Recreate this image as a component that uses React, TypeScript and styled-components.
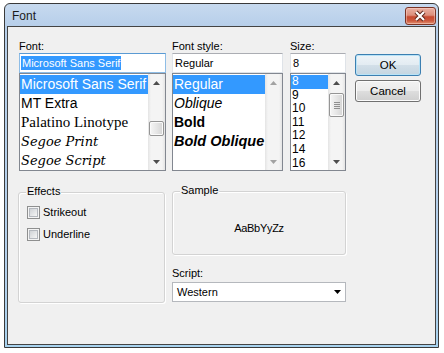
import styled, { createGlobalStyle } from "styled-components";

const GlobalStyle = createGlobalStyle`
  html, body {
    margin: 0;
    padding: 0;
    background: #fff;
  }
  body {
    font-family: "Liberation Sans", Arial, sans-serif;
    font-size: 11px;
    color: #000;
  }
`;

type FontItem = {
  name: string;
  family: string;
  size: number;
  italic?: boolean;
  bold?: boolean;
};

const fonts: FontItem[] = [
  { name: "Microsoft Sans Serif", family: '"Liberation Sans", sans-serif', size: 14 },
  { name: "MT Extra", family: '"Liberation Sans", sans-serif', size: 14 },
  { name: "Palatino Linotype", family: '"Liberation Serif", serif', size: 15 },
  { name: "Segoe Print", family: '"DejaVu Serif", serif', size: 13, italic: true },
  { name: "Segoe Script", family: '"DejaVu Serif", serif', size: 13, italic: true },
];

const styles: FontItem[] = [
  { name: "Regular", family: '"Liberation Sans", sans-serif', size: 14 },
  { name: "Oblique", family: '"Liberation Sans", sans-serif', size: 14, italic: true },
  { name: "Bold", family: '"Liberation Sans", sans-serif', size: 14, bold: true },
  { name: "Bold Oblique", family: '"Liberation Sans", sans-serif', size: 14.5, italic: true, bold: true },
];

const sizes = ["8", "9", "10", "11", "12", "14", "16"];

export default function App() {
  return (
    <>
      <GlobalStyle />
      <Window>
        <TitleBar>
          <Title>Font</Title>
          <CloseButton>
            <svg width="29" height="16" viewBox="0 0 29 16">
              <path d="M10 4 L18 12 M18 4 L10 12" stroke="#5b2317" strokeWidth="4" />
              <path d="M10 4 L18 12 M18 4 L10 12" stroke="#fff" strokeWidth="2.2" />
            </svg>
          </CloseButton>
        </TitleBar>
        <Client>
          <TopRow>
            <Column $width={147}>
              <Label>Font:</Label>
              <TextBox $focused>
                <Selected>Microsoft Sans Serif</Selected>
              </TextBox>
              <ListBox>
                <Items>
                  {fonts.map((f, i) => (
                    <Item
                      key={f.name}
                      $h={19}
                      $family={f.family}
                      $size={f.size}
                      $italic={f.italic}
                      $bold={f.bold}
                      $selected={i === 0}
                    >
                      {f.name}
                    </Item>
                  ))}
                </Items>
                <ScrollBar thumbTop={30} thumbHeight={15} />
              </ListBox>
            </Column>
            <Column $width={111} $gap={6}>
              <Label>Font style:</Label>
              <TextBox>Regular</TextBox>
              <ListBox>
                <Items>
                  {styles.map((f, i) => (
                    <Item
                      key={f.name}
                      $h={19}
                      $family={f.family}
                      $size={f.size}
                      $italic={f.italic}
                      $bold={f.bold}
                      $selected={i === 0}
                    >
                      {f.name}
                    </Item>
                  ))}
                </Items>
                <ScrollBar disabled />
              </ListBox>
            </Column>
            <Column $width={56} $gap={7}>
              <Label>Size:</Label>
              <TextBox>8</TextBox>
              <ListBox>
                <Items>
                  {sizes.map((s, i) => (
                    <Item
                      key={s}
                      $h={13.6}
                      $family='"Liberation Sans", sans-serif'
                      $size={12}
                      $selected={i === 0}
                    >
                      {s}
                    </Item>
                  ))}
                </Items>
                <ScrollBar thumbTop={2} thumbHeight={24} grip />
              </ListBox>
            </Column>
            <ButtonColumn>
              <Button $default>OK</Button>
              <Button>Cancel</Button>
            </ButtonColumn>
          </TopRow>
          <BottomRow>
            <GroupBox $width={147} $height={111} $offset={1}>
              <Legend>Effects</Legend>
              <CheckList>
                <CheckRow>
                  <CheckBox>
                    <CheckInner />
                  </CheckBox>
                  Strikeout
                </CheckRow>
                <CheckRow>
                  <CheckBox>
                    <CheckInner />
                  </CheckBox>
                  Underline
                </CheckRow>
              </CheckList>
            </GroupBox>
            <RightStack>
              <GroupBox $width={174} $height={64}>
                <Legend>Sample</Legend>
                <SampleText>AaBbYyZz</SampleText>
              </GroupBox>
              <ScriptLabel>Script:</ScriptLabel>
              <Select>
                Western
                <svg width="7" height="4" viewBox="0 0 7 4">
                  <polygon points="0,0 7,0 3.5,4" fill="#000" />
                </svg>
              </Select>
            </RightStack>
          </BottomRow>
        </Client>
      </Window>
    </>
  );
}

interface ScrollBarProps {
  thumbTop?: number;
  thumbHeight?: number;
  grip?: boolean;
  disabled?: boolean;
}

const ScrollBar = ({ thumbTop, thumbHeight, grip, disabled }: ScrollBarProps) => {
  const color = disabled ? "#a3a3a3" : "#4d4d4d";
  return (
    <Bar>
      <ArrowBox>
        <svg width="7" height="4" viewBox="0 0 7 4">
          <polygon points="0,4 3.5,0 7,4" fill={color} />
        </svg>
      </ArrowBox>
      <Track>
        {thumbHeight !== undefined && (
          <Thumb $top={thumbTop ?? 0} $h={thumbHeight}>
            {grip && (
              <>
                <Grip />
                <Grip />
                <Grip />
                <Grip />
              </>
            )}
          </Thumb>
        )}
      </Track>
      <ArrowBox>
        <svg width="7" height="4" viewBox="0 0 7 4">
          <polygon points="0,0 7,0 3.5,4" fill={color} />
        </svg>
      </ArrowBox>
    </Bar>
  );
};

const Window = styled.div`
  box-sizing: border-box;
  width: 435px;
  height: 345px;
  margin: 3px 0 0 4px;
  border: 1px solid #3a3a3a;
  border-radius: 6px 6px 0 0;
  background: linear-gradient(#c7daef, #b7cfea 22px, #b3d0ec 80%, #a8d3ef);
  padding: 0 2px 2px;
  display: flex;
  flex-direction: column;
`;

const TitleBar = styled.div`
  height: 22px;
  display: flex;
  justify-content: space-between;
  align-items: flex-start;
  padding-left: 5px;
`;

const Title = styled.div`
  font-family: "Liberation Sans", Arial, sans-serif;
  font-size: 12px;
  line-height: 22px;
  padding-top: 1px;
  color: #1b1b1b;
`;

const CloseButton = styled.div`
  box-sizing: border-box;
  width: 31px;
  height: 18px;
  margin-top: 3px;
  border: 1px solid #7a3324;
  border-radius: 3px;
  background: linear-gradient(#eab1a3 0%, #dc8f7c 45%, #c74a30 55%, #cc5a3f 80%, #e29474 100%);
  box-shadow: inset 0 0 0 1px rgba(255, 220, 210, 0.45);
  display: flex;
  align-items: center;
  justify-content: center;
`;

const Client = styled.div`
  flex: 1;
  border: 1px solid #444;
  background: #f0f0f0;
  padding: 13px 0 0 11px;
`;

const TopRow = styled.div`
  display: flex;
  align-items: flex-start;
`;

const Column = styled.div<{ $width: number; $gap?: number }>`
  width: ${(p) => p.$width}px;
  margin-left: ${(p) => p.$gap ?? 0}px;
  display: flex;
  flex-direction: column;
`;

const Label = styled.div`
  height: 13px;
  line-height: 13px;
`;

const TextBox = styled.div<{ $focused?: boolean }>`
  box-sizing: border-box;
  height: 20px;
  background: #fff;
  border: 1px solid ${(p) => (p.$focused ? "#8ebde6" : "#dfe3e8")};
  border-top-color: ${(p) => (p.$focused ? "#5a9ad3" : "#abadb3")};
  padding: 0 2px;
  display: flex;
  align-items: center;
  white-space: nowrap;
  overflow: hidden;
`;

const Selected = styled.span`
  display: inline-block;
  line-height: 14px;
  margin-left: -1px;
  padding: 0 1px;
  background: #3399ff;
  color: #fff;
`;

const ListBox = styled.div`
  box-sizing: border-box;
  height: 98px;
  border: 1px solid #828790;
  background: #fff;
  display: flex;
`;

const Items = styled.div`
  flex: 1;
  min-width: 0;
  overflow: hidden;
  padding-top: 1px;
`;

const Item = styled.div<{
  $h: number;
  $family: string;
  $size: number;
  $italic?: boolean;
  $bold?: boolean;
  $selected?: boolean;
}>`
  height: ${(p) => p.$h}px;
  line-height: ${(p) => p.$h}px;
  padding-left: 1px;
  white-space: nowrap;
  font-family: ${(p) => p.$family};
  font-size: ${(p) => p.$size}px;
  font-style: ${(p) => (p.$italic ? "italic" : "normal")};
  font-weight: ${(p) => (p.$bold ? "bold" : "normal")};
  background: ${(p) => (p.$selected ? "#3399ff" : "transparent")};
  color: ${(p) => (p.$selected ? "#fff" : "#000")};
`;

const Bar = styled.div`
  width: 17px;
  flex-shrink: 0;
  display: flex;
  flex-direction: column;
  background: linear-gradient(to right, #e4e4e4, #f4f4f4 3px, #f4f4f4 14px, #e4e4e4);
`;

const ArrowBox = styled.div`
  height: 17px;
  display: flex;
  align-items: center;
  justify-content: center;
`;

const Track = styled.div`
  flex: 1;
`;

const Thumb = styled.div<{ $top: number; $h: number }>`
  box-sizing: border-box;
  margin: ${(p) => p.$top}px 1px 0;
  height: ${(p) => p.$h}px;
  border: 1px solid #959595;
  border-radius: 2px;
  background: linear-gradient(to right, #f6f6f6, #e6e6e6 50%, #d4d4d4);
  box-shadow: inset 0 0 0 1px #fafafa;
  display: flex;
  flex-direction: column;
  align-items: center;
  justify-content: center;
  gap: 1px;
`;

const Grip = styled.span`
  width: 6px;
  height: 1px;
  background: #8f8f8f;
`;

const ButtonColumn = styled.div`
  margin: 14px 0 0 9px;
  display: flex;
  flex-direction: column;
  gap: 4px;
`;

const Button = styled.button<{ $default?: boolean }>`
  box-sizing: border-box;
  width: 66px;
  height: 22px;
  padding: 0;
  font-family: "Liberation Sans", Arial, sans-serif;
  font-size: 11.5px;
  color: #000;
  border-radius: 3px;
  border: 1px solid ${(p) => (p.$default ? "#3c7fb1" : "#707070")};
  background: ${(p) =>
    p.$default
      ? "linear-gradient(#eef4f8 0%, #e3ecf2 48%, #d2dfe8 52%, #c4d5e1 100%)"
      : "linear-gradient(#f2f2f2 0%, #ebebeb 48%, #dddddd 52%, #cfcfcf 100%)"};
  box-shadow: inset 0 0 0 1px ${(p) => (p.$default ? "#b8e3f7" : "#fbfbfb")};
`;

const BottomRow = styled.div`
  display: flex;
  align-items: flex-start;
  margin-top: 20px;
`;

const GroupBox = styled.div<{ $width: number; $height: number; $offset?: number }>`
  position: relative;
  box-sizing: border-box;
  width: ${(p) => p.$width}px;
  height: ${(p) => p.$height}px;
  margin-top: ${(p) => p.$offset ?? 0}px;
  margin-left: ${(p) => (p.$offset ? -1 : 0)}px;
  border: 1px solid #d3d3d3;
  border-radius: 3px;
  box-shadow: inset 1px 1px 0 #fff, 1px 1px 0 #fff;
`;

const Legend = styled.span`
  position: absolute;
  top: -8px;
  left: 7px;
  padding: 0 1px;
  line-height: 13px;
  background: #f0f0f0;
`;

const CheckList = styled.div`
  padding: 13px 0 0 8px;
  display: flex;
  flex-direction: column;
  gap: 9px;
`;

const CheckRow = styled.div`
  display: flex;
  align-items: center;
  gap: 3px;
  height: 13px;
  line-height: 13px;
`;

const CheckBox = styled.span`
  box-sizing: border-box;
  width: 13px;
  height: 13px;
  border: 1px solid #8e8f8f;
  background: #f4f4f4;
  padding: 1px;
  display: flex;
`;

const CheckInner = styled.span`
  flex: 1;
  border: 1px solid #b4b8be;
  background: linear-gradient(135deg, #cfd2d6, #f5f5f5);
`;

const SampleText = styled.div`
  height: 100%;
  display: flex;
  align-items: center;
  justify-content: center;
  padding-top: 9px;
  box-sizing: border-box;
  letter-spacing: -0.3px;
`;

const RightStack = styled.div`
  margin-left: 7px;
  display: flex;
  flex-direction: column;
`;

const ScriptLabel = styled(Label)`
  margin-top: 12px;
`;

const Select = styled.div`
  box-sizing: border-box;
  width: 174px;
  height: 20px;
  margin-top: 2px;
  border: 1px solid #b5b8bd;
  background: #fff;
  padding: 0 4px;
  display: flex;
  align-items: center;
  justify-content: space-between;
`;
